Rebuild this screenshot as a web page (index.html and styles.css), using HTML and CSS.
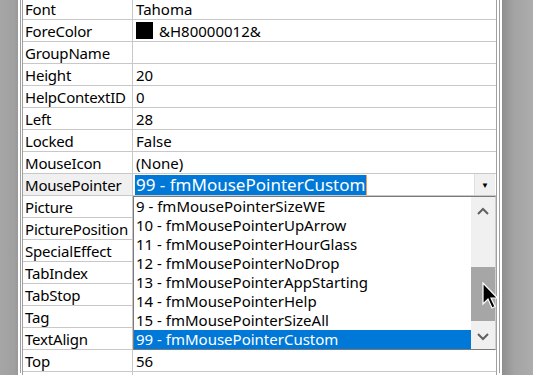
FILE: index.html
```html
<!DOCTYPE html>
<html lang="en">
<head>
    <meta charset="UTF-8">
    <title>Properties</title>
    <link rel="stylesheet" href="styles.css">
</head>
<body>
    <div class="side-left"></div>
    <div class="panel">
        <div class="frame">
            <div class="props">
                <div class="row"><div class="name">Font</div><div class="value">Tahoma</div></div>
                <div class="row"><div class="name">ForeColor</div><div class="value"><span class="swatch"></span>&amp;H80000012&amp;</div></div>
                <div class="row"><div class="name">GroupName</div><div class="value"></div></div>
                <div class="row"><div class="name">Height</div><div class="value">20</div></div>
                <div class="row"><div class="name">HelpContextID</div><div class="value">0</div></div>
                <div class="row"><div class="name">Left</div><div class="value">28</div></div>
                <div class="row"><div class="name">Locked</div><div class="value">False</div></div>
                <div class="row"><div class="name">MouseIcon</div><div class="value">(None)</div></div>
                <div class="row active">
                    <div class="name">MousePointer</div>
                    <div class="value edit">
                        <span class="sel">99 - fmMousePointerCustom</span><span class="caret"></span>
                        <span class="drop-btn">&#9660;</span>
                    </div>
                </div>
                <div class="row"><div class="name">Picture</div><div class="value"></div></div>
                <div class="row"><div class="name">PicturePosition</div><div class="value"></div></div>
                <div class="row"><div class="name">SpecialEffect</div><div class="value"></div></div>
                <div class="row"><div class="name">TabIndex</div><div class="value"></div></div>
                <div class="row"><div class="name">TabStop</div><div class="value"></div></div>
                <div class="row"><div class="name">Tag</div><div class="value"></div></div>
                <div class="row"><div class="name">TextAlign</div><div class="value"></div></div>
                <div class="row"><div class="name">Top</div><div class="value">56</div></div>
                <div class="row"><div class="name"></div><div class="value"></div></div>

                <div class="list">
                    <div class="items">
                        <div class="item">9 - fmMousePointerSizeWE</div>
                        <div class="item">10 - fmMousePointerUpArrow</div>
                        <div class="item">11 - fmMousePointerHourGlass</div>
                        <div class="item">12 - fmMousePointerNoDrop</div>
                        <div class="item">13 - fmMousePointerAppStarting</div>
                        <div class="item">14 - fmMousePointerHelp</div>
                        <div class="item">15 - fmMousePointerSizeAll</div>
                        <div class="item picked">99 - fmMousePointerCustom</div>
                    </div>
                    <div class="scrollbar">
                        <div class="arrow">
                            <svg width="12" height="8" viewBox="0 0 12 8"><path d="M1 7 L6 2 L11 7" fill="none" stroke="#606060" stroke-width="2"/></svg>
                        </div>
                        <div class="track"><div class="thumb"></div></div>
                        <div class="arrow">
                            <svg width="12" height="8" viewBox="0 0 12 8"><path d="M1 1 L6 6 L11 1" fill="none" stroke="#606060" stroke-width="2"/></svg>
                        </div>
                    </div>
                </div>
            </div>
        </div>
    </div>
    <div class="side-right"></div>

    <svg class="cursor" width="17" height="28" viewBox="0 0 17 28">
        <path d="M1 1 L1 22 L6 17 L10 26 L13 24.5 L9 16 L15.5 16 Z" fill="#000" stroke="#fff" stroke-width="1.2"/>
    </svg>
</body>
</html>
```

FILE: styles.css
```css
*{
    box-sizing: border-box;
    margin: 0;
}

html, body{
    overflow: hidden;
}

body{
    position: relative;
    height: 375px;
    display: flex;
    font-family: 'Noto Sans', 'Open Sans', sans-serif;
    font-size: 15px;
    color: #000;
    background-color: #a3a3a3;
}

.side-left{
    width: 18px;
    background: linear-gradient(to right, #a6a6a6, #a0a0a0 80%, #999999);
}

.side-right{
    flex: 1;
    background: linear-gradient(to right, #8e8e8e, #a4a4a4 40%, #acacac);
}

.panel{
    width: 484px;
    height: 375px;
    overflow: hidden;
    background-color: #fff;
    padding: 0 2px;
}

.frame{
    height: 100%;
    border-left: 1px solid #a0a0a0;
    border-right: 1px solid #a0a0a0;
    padding: 0 2px 0 1px;
}

.props{
    position: relative;
    margin-top: -2px;
    border-left: 1px solid #a0a0a0;
    border-right: 1px solid #a0a0a0;
}

.row{
    display: grid;
    grid-template-columns: 110px 1fr;
    height: 22px;
    border-bottom: 1px solid #c8c8c8;
}

.name, .value{
    display: flex;
    align-items: center;
    padding-left: 2px;
    white-space: nowrap;
    overflow: hidden;
}

.name{
    border-right: 1px solid #c8c8c8;
    letter-spacing: -0.2px;
}

.value{
    padding-left: 3px;
}

.swatch{
    flex: none;
    width: 17px;
    height: 17px;
    background-color: #000;
    margin-right: 6px;
}

.active .name{
    background-color: #f0f0f0;
}

.edit{
    position: relative;
    padding-left: 2px;
}

.sel{
    background-color: #0078d7;
    color: #fff;
    padding: 0 1px;
    font-size: 17px;
    line-height: 20px;
}

.caret{
    width: 1px;
    height: 20px;
    background-color: #e8a060;
}

.drop-btn{
    position: absolute;
    right: 1px;
    top: 0;
    width: 21px;
    height: 21px;
    display: flex;
    align-items: center;
    justify-content: center;
    background-color: #f0f0f0;
    border-left: 1px solid #e0e0e0;
    font-size: 8px;
    color: #000;
}

.list{
    position: absolute;
    left: 110px;
    top: 198px;
    width: 363px;
    height: 154px;
    display: flex;
    background-color: #fff;
    border: 1px solid #7a7a7a;
    border-right-color: #d0d0d0;
}

.items{
    flex: 1;
}

.item{
    height: 19px;
    line-height: 19px;
    padding-left: 2px;
    white-space: nowrap;
}

.picked{
    background-color: #0078d7;
    color: #fff;
}

.scrollbar{
    width: 24px;
    display: flex;
    flex-direction: column;
    background-color: #f0f0f0;
}

.arrow{
    height: 24px;
    display: flex;
    align-items: center;
    justify-content: center;
}

.scrollbar .arrow:first-child{
    height: 28px;
}

.track{
    flex: 1;
    display: flex;
    flex-direction: column;
    justify-content: flex-end;
    padding: 0 0 4px 0;
}

.thumb{
    height: 54px;
    background-color: #a6a6a6;
}

.cursor{
    position: absolute;
    left: 482px;
    top: 282px;
}
```
